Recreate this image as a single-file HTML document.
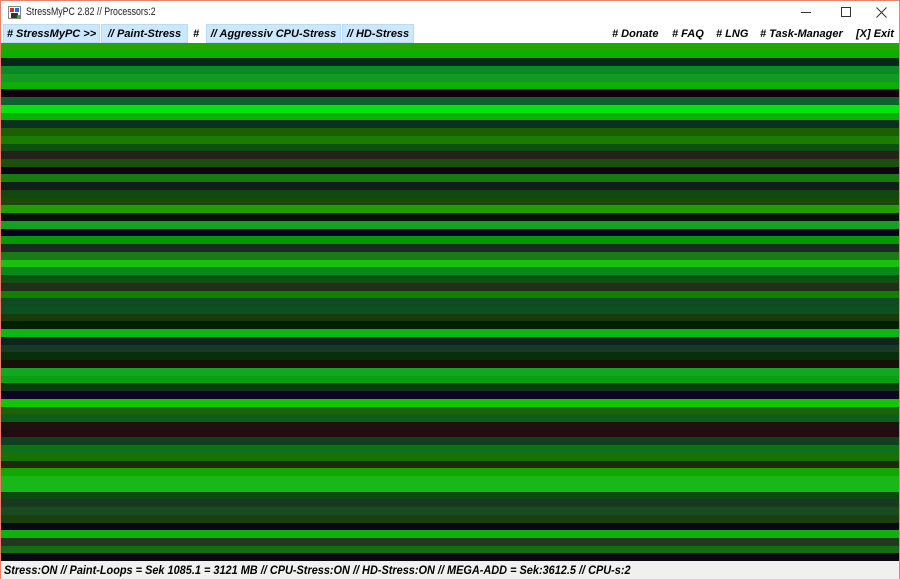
<!DOCTYPE html>
<html><head><meta charset="utf-8"><style>
*{margin:0;padding:0;box-sizing:border-box}
html,body{width:900px;height:579px;overflow:hidden;background:#fff;font-family:"Liberation Sans",Arial,sans-serif}
#win{position:absolute;left:0;top:0;width:900px;height:579px;border:1px solid #e8826a;background:#fff}
#title{position:absolute;left:0;top:0;width:898px;height:23px;font-size:12px;color:#000}
#title .t{position:absolute;left:25px;top:5px;font-family:"Liberation Sans",sans-serif;font-size:11px;transform:scaleX(0.8);transform-origin:left top;white-space:nowrap;color:#222}
#icon{position:absolute;left:7px;top:5px;width:13px;height:13px;border:1px solid #888;background:#fff}
#icon i{position:absolute;display:block}
.ctl{position:absolute;top:0;height:23px;width:45px}
.tab{position:absolute;top:23px;height:19px;background:#cce8ff;border:1px solid #b8dcf8;font-weight:bold;font-style:italic;font-size:11px;line-height:18px;text-align:center;white-space:nowrap}
.m{position:absolute;top:23px;height:19px;font-weight:bold;font-style:italic;font-size:11px;line-height:20px;white-space:nowrap}
#stripes{position:absolute;left:0;top:42px;width:898px;height:518px;display:flex;flex-direction:column}
#stripes div{flex:1}
#status{position:absolute;left:0;top:560px;width:898px;height:18px;background:#f0f0f0}
#status span{position:absolute;left:3px;top:2px;font-weight:bold;font-style:italic;font-size:12px;white-space:nowrap;transform:scaleX(0.91);transform-origin:left top;letter-spacing:0}
</style></head><body>
<div id="win">
<div id="title">
 <div id="icon"><i style="left:1px;top:1px;width:4px;height:4px;background:#c33"></i><i style="left:6px;top:1px;width:4px;height:4px;background:#36c"></i><i style="left:2px;top:6px;width:7px;height:5px;background:#333"></i><i style="left:8px;top:8px;width:3px;height:3px;background:#3a3"></i></div>
 <div class="t">StressMyPC 2.82 // Processors:2</div>
 <div class="ctl" style="left:783px"><div style="position:absolute;left:17px;top:11px;width:10px;height:1px;background:#333"></div></div>
 <div class="ctl" style="left:828px"><div style="position:absolute;left:12px;top:6px;width:10px;height:10px;border:1px solid #333"></div></div>
 <div class="ctl" style="left:853px"><svg style="position:absolute;left:22px;top:6px" width="11" height="11"><path d="M0.5 0.5L10.5 10.5M10.5 0.5L0.5 10.5" stroke="#333" stroke-width="1"/></svg></div>
</div>
<div class="tab" style="left:2px;width:97px"># StressMyPC &gt;&gt;</div>
<div class="tab" style="left:100px;width:87px">// Paint-Stress</div>
<div class="m" style="left:192px"># </div>
<div class="tab" style="left:205px;width:135px">// Aggressiv CPU-Stress</div>
<div class="tab" style="left:341px;width:72px">// HD-Stress</div>
<div class="m" style="left:611px"># Donate</div>
<div class="m" style="left:671px"># FAQ</div>
<div class="m" style="left:715px"># LNG</div>
<div class="m" style="left:759px"># Task-Manager</div>
<div class="m" style="left:855px">[X] Exit</div>
<div id="stripes">
<div style="background:#1ea800"></div><div style="background:#0ab000"></div><div style="background:#032818"></div><div style="background:#0a8a20"></div><div style="background:#139a20"></div><div style="background:#0cb000"></div><div style="background:#150008"></div><div style="background:#106030"></div><div style="background:#08e010"></div><div style="background:#08b008"></div><div style="background:#0a3020"></div><div style="background:#1a6000"></div><div style="background:#1a7c00"></div><div style="background:#0e5010"></div><div style="background:#252018"></div><div style="background:#1a5008"></div><div style="background:#100018"></div><div style="background:#1a7a10"></div><div style="background:#101e18"></div><div style="background:#104810"></div><div style="background:#184a08"></div><div style="background:#20a000"></div><div style="background:#041008"></div><div style="background:#14a020"></div><div style="background:#080020"></div><div style="background:#009a00"></div><div style="background:#1a2a20"></div><div style="background:#1a7a18"></div><div style="background:#18c010"></div><div style="background:#0a8820"></div><div style="background:#105010"></div><div style="background:#203018"></div><div style="background:#108000"></div><div style="background:#104a20"></div><div style="background:#0a5020"></div><div style="background:#1a3a08"></div><div style="background:#002000"></div><div style="background:#08b818"></div><div style="background:#0a2818"></div><div style="background:#183828"></div><div style="background:#083008"></div><div style="background:#181008"></div><div style="background:#10a820"></div><div style="background:#08a010"></div><div style="background:#0a3a10"></div><div style="background:#0a0620"></div><div style="background:#10c800"></div><div style="background:#206008"></div><div style="background:#0a6018"></div><div style="background:#201010"></div><div style="background:#200c10"></div><div style="background:#104020"></div><div style="background:#10701a"></div><div style="background:#1a7008"></div><div style="background:#202810"></div><div style="background:#10a800"></div><div style="background:#18b818"></div><div style="background:#18b818"></div><div style="background:#0a4a10"></div><div style="background:#1a3a20"></div><div style="background:#1a4a20"></div><div style="background:#1a4010"></div><div style="background:#080818"></div><div style="background:#10b010"></div><div style="background:#203820"></div><div style="background:#107010"></div><div style="background:#080810"></div>
</div>
<div id="status"><span>Stress:ON // Paint-Loops = Sek 1085.1 = 3121 MB // CPU-Stress:ON // HD-Stress:ON // MEGA-ADD = Sek:3612.5 // CPU-s:2</span></div>
</div>
</body></html>
